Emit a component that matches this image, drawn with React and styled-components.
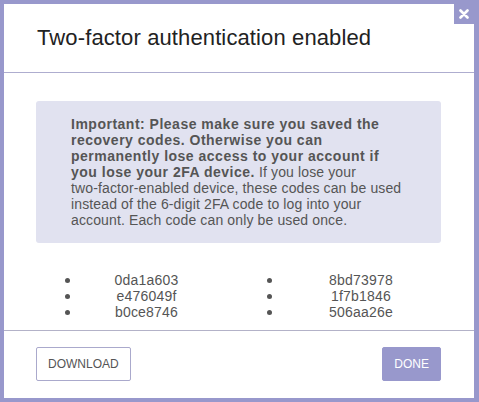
import React from "react";
import styled, { createGlobalStyle } from "styled-components";

const GlobalStyle = createGlobalStyle`
  html, body {
    margin: 0;
    padding: 0;
    background: #9898cc;
  }
  body {
    font-family: "Liberation Sans", Arial, sans-serif;
  }
`;

const codes = [
  ["0da1a603", "e476049f", "b0ce8746"],
  ["8bd73978", "1f7b1846", "506aa26e"],
];

const App = () => {
  return (
    <>
      <GlobalStyle />
      <Dialog>
        <CloseButton aria-label="Close">
          <svg width="10" height="10" viewBox="0 0 10 10">
            <path
              d="M1.5 1.5 L8.5 8.5 M8.5 1.5 L1.5 8.5"
              stroke="#fff"
              strokeWidth="2.6"
              strokeLinecap="round"
            />
          </svg>
        </CloseButton>

        <Header>
          <Title>Two-factor authentication enabled</Title>
        </Header>

        <Body>
          <Notice>
            <Strong>
              Important: Please make sure you saved the recovery codes.
              Otherwise you can permanently lose access to your account if you
              lose your 2FA device.
            </Strong>{" "}
            If you lose your <NoWrap>two-factor-enabled</NoWrap> device, these
            codes can be used instead of the 6-digit 2FA code to log into your
            account. Each code can only be used once.
          </Notice>

          <CodeGrid>
            {codes.map((col, i) => (
              <CodeColumn key={i} $codeWidth={i === 0 ? 153 : 178}>
                {col.map((code) => (
                  <CodeItem key={code}>
                    <Bullet />
                    <Code>{code}</Code>
                  </CodeItem>
                ))}
              </CodeColumn>
            ))}
          </CodeGrid>
        </Body>

        <Footer>
          <Button>Download</Button>
          <Button $primary>Done</Button>
        </Footer>
      </Dialog>
    </>
  );
};

const Dialog = styled.div`
  position: relative;
  margin: 4px 5px 4px 4px;
  width: 470px;
  height: 394px;
  background: #fff;
  display: flex;
  flex-direction: column;
`;

const CloseButton = styled.button`
  position: absolute;
  top: 0;
  right: 0;
  width: 20px;
  height: 20px;
  border: 0;
  padding: 0;
  background: #9898cc;
  display: flex;
  align-items: center;
  justify-content: center;
  cursor: pointer;
`;

const Header = styled.div`
  height: 68px;
  padding: 0 33px;
  display: flex;
  align-items: center;
  border-bottom: 1px solid #aeadcf;
`;

const Title = styled.h1`
  margin: 0;
  font-size: 22px;
  font-weight: normal;
  color: #222;
  line-height: 26px;
  letter-spacing: 0.12px;
`;

const Body = styled.div`
  padding: 28px 33px 10px 32px;
  border-bottom: 1px solid #b3b2c8;
`;

const Notice = styled.div`
  background: #e1e2f0;
  border-radius: 3px;
  padding: 15px 35px 15px 35px;
  font-size: 14px;
  line-height: 16px;
  color: #555;
  letter-spacing: 0.13px;
`;

const Strong = styled.strong`
  font-weight: bold;
  letter-spacing: 0.5px;
`;

const NoWrap = styled.span`
  white-space: nowrap;
`;

const CodeGrid = styled.div`
  display: flex;
  gap: 44px;
  margin: 29px 0 0 29px;
`;

const CodeColumn = styled.ul`
  margin: 0;
  padding: 0;
  list-style: none;
  display: flex;
  flex-direction: column;
  flex-shrink: 0;
  width: ${(p) => p.$codeWidth + 5}px;
`;

const CodeItem = styled.li`
  display: flex;
  align-items: center;
  height: 16px;
`;

const Bullet = styled.span`
  width: 5px;
  height: 5px;
  border-radius: 50%;
  background: #555;
  flex-shrink: 0;
`;

const Code = styled.span`
  flex: 1;
  text-align: center;
  font-size: 14px;
  color: #555;
  letter-spacing: 0.2px;
`;

const Footer = styled.div`
  display: flex;
  justify-content: space-between;
  padding: 16px 33px 0 32px;
`;

const Button = styled.button`
  height: 34px;
  padding: 0 11px;
  border-radius: 2px;
  font-family: "Liberation Sans", Arial, sans-serif;
  font-size: 12px;
  text-transform: uppercase;
  cursor: pointer;
  border: 1px solid ${(p) => (p.$primary ? "#9898cc" : "#aaa9cc")};
  background: ${(p) => (p.$primary ? "#9898cc" : "#fff")};
  color: ${(p) => (p.$primary ? "#fff" : "#555")};
`;

export default App;
